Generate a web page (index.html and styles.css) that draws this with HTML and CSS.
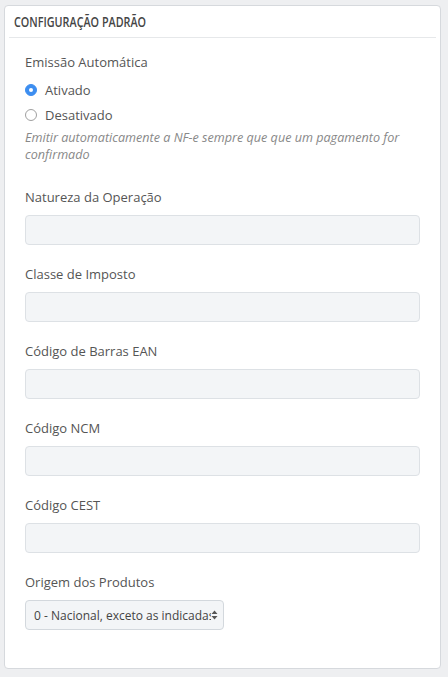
FILE: index.html
```html
<!DOCTYPE html>
<html lang="pt-BR">
<head>
<meta charset="utf-8">
<link rel="stylesheet" href="styles.css">
</head>
<body>
<div class="card">
  <div class="card-header"><span class="title">CONFIGURAÇÃO PADRÃO</span></div>
  <div class="card-body">
    <div class="group group-radio">
      <div class="label">Emissão Automática</div>
      <label class="radio first"><span class="dot checked"></span>Ativado</label>
      <label class="radio second"><span class="dot"></span>Desativado</label>
      <div class="help">Emitir automaticamente a NF-e sempre que que um pagamento for confirmado</div>
    </div>
    <div class="group">
      <div class="label">Natureza da Operação</div>
      <div class="input"></div>
    </div>
    <div class="group">
      <div class="label">Classe de Imposto</div>
      <div class="input"></div>
    </div>
    <div class="group">
      <div class="label">Código de Barras EAN</div>
      <div class="input"></div>
    </div>
    <div class="group">
      <div class="label">Código NCM</div>
      <div class="input"></div>
    </div>
    <div class="group">
      <div class="label">Código CEST</div>
      <div class="input"></div>
    </div>
    <div class="group">
      <div class="label">Origem dos Produtos</div>
      <div class="select">
        <span class="select-text">0 - Nacional, exceto as indicadas no código 3, 4, 5 e 8</span>
        <svg class="arrows" width="7" height="10" viewBox="0 0 7 10"><path d="M3.5 0.5 L6.5 4 L0.5 4 Z M3.5 9.5 L6.5 6 L0.5 6 Z" fill="#555"/></svg>
      </div>
    </div>
  </div>
</div>
</body>
</html>
```
FILE: styles.css
```css
html, body {
  margin: 0;
  padding: 0;
  background: #eeeff1;
}
body {
  padding: 5px 7px 7px 4px;
  font-family: "Open Sans", "Noto Sans", sans-serif;
  color: #555;
}
.card {
  background: #fff;
  border: 1px solid #d6d9dd;
  border-radius: 4px;
  height: 664px;
  box-sizing: border-box;
  padding: 0 4px;
}
.card-header {
  font-family: "Open Sans", sans-serif;
  font-size: 14px;
  font-weight: 600;
  color: #454545;
  height: 31px;
  line-height: 32px;
  padding-left: 5px;
  border-bottom: 1px solid #e6e8ea;
}
.title {
  display: inline-block;
  transform: scaleX(0.77);
  transform-origin: left center;
  white-space: nowrap;
}
.card-body {
  padding: 14px 16px 0 16px;
}
.group {
  margin-bottom: 19px;
}
.group-radio {
  margin-bottom: 24px;
}
.label {
  font-size: 13px;
  line-height: 20px;
  color: #555;
  margin-bottom: 8px;
}
.group-radio .label {
  margin-bottom: 7px;
}
.radio {
  display: flex;
  align-items: center;
  font-size: 13px;
  line-height: 19px;
  color: #555;
}
.radio.first {
  height: 22px;
}
.radio.second {
  height: 28px;
}
.dot {
  width: 12px;
  height: 12px;
  border-radius: 50%;
  border: 1px solid #a0a0a0;
  box-sizing: border-box;
  margin-right: 8px;
  background: #fff;
  display: inline-block;
  position: relative;
}
.dot.checked {
  background: #3d8ef0;
  border-color: #3d8ef0;
}
.dot.checked::after {
  content: "";
  position: absolute;
  width: 4px;
  height: 4px;
  background: #fff;
  border-radius: 50%;
  left: 3px;
  top: 3px;
}
.help {
  font-size: 12.6px;
  font-style: italic;
  color: #888;
  line-height: 17px;
}
.input {
  height: 30px;
  box-sizing: border-box;
  background: #f3f5f7;
  border: 1px solid #dde1e5;
  border-radius: 4px;
}
.select {
  width: 199px;
  height: 30px;
  box-sizing: border-box;
  background: #f3f5f7;
  border: 1px solid #d3d8dd;
  border-radius: 4px;
  display: flex;
  align-items: center;
  padding: 0 5px 0 8px;
}
.select-text {
  font-size: 12px;
  color: #444;
  white-space: nowrap;
  overflow: hidden;
  width: 177px;
}
.arrows {
  margin-left: auto;
  flex: none;
}
```
